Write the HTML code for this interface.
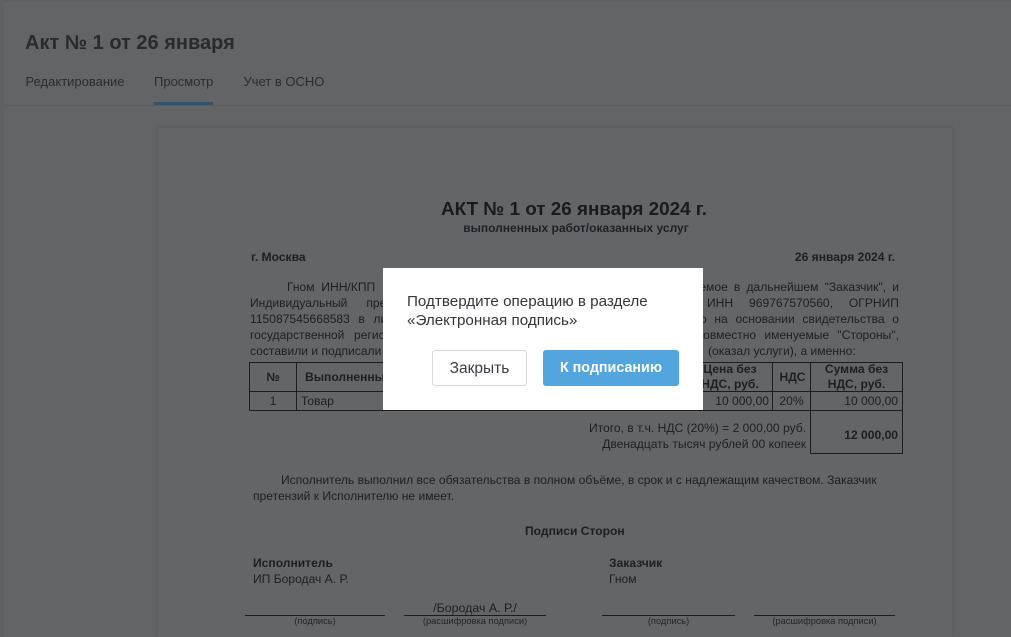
<!DOCTYPE html>
<html lang="ru"><head><meta charset="utf-8"><title>Акт</title>
<style>
html,body{margin:0;padding:0;width:1011px;height:637px;overflow:hidden;background:#636466}
body{position:relative;font-family:"Liberation Sans",Arial,sans-serif;color:#262626}
.a{position:absolute;white-space:nowrap}
.d{font-size:12.08px;line-height:16px;color:#1e1f21}
.j{text-align:justify;text-align-last:justify;white-space:normal}
.b{font-weight:bold}
.l{position:absolute;background:#1d1d1f}
.s{font-size:9.3px;line-height:11px;color:#242527;text-align:center}
.c{text-align:center}.r{text-align:right}
</style></head><body>
<div class="a" style="left:0;top:0;width:4px;height:637px;background:#5f6062"></div>
<div class="a" style="left:0;top:0;width:1011px;height:2px;background:#5f6062"></div>
<div class="a" style="left:4px;top:105px;width:1007px;height:1px;background:#5b5c5e"></div>
<div class="a" style="left:158px;top:128px;width:794px;height:509px;background:#646567;box-shadow:0 0 6px rgba(0,0,0,.12)"></div>

<div class="a b" style="left:25px;top:31px;font-size:20px;line-height:24px;color:#2a2b2d">Акт № 1 от 26 января</div>
<div class="a" style="left:25.5px;top:74px;font-size:13px;line-height:16px;color:#2c2d2f">Редактирование</div>
<div class="a" style="left:154px;top:74px;font-size:13px;line-height:16px;color:#2c2d2f">Просмотр</div>
<div class="a" style="left:243.5px;top:74px;font-size:13px;line-height:16px;color:#2c2d2f">Учет в ОСНО</div>
<div class="a" style="left:154px;top:102px;width:59px;height:3px;background:#34536b"></div>

<div class="a b c" style="left:157px;width:834px;top:198px;font-size:18.85px;line-height:22px;color:#1a1b1d">АКТ № 1 от 26 января 2024 г.</div>
<div class="a b c" style="left:157px;width:838px;top:221px;font-size:12px;line-height:15px;color:#202124">выполненных работ/оказанных услуг</div>
<div class="a d b" style="left:251px;top:249px">г. Москва</div>
<div class="a d b r" style="right:116px;top:249px">26 января 2024 г.</div>

<div class="a d" style="left:287px;top:279px;word-spacing:3.4px">Гном ИНН/КПП</div>
<div class="a d j" style="left:665px;width:234px;top:279px">именуемое в дальнейшем "Заказчик", и</div>
<div class="a d" style="left:250px;top:295px;word-spacing:15.6px">Индивидуальный предприниматель</div>
<div class="a d j" style="left:707px;width:192px;top:295px">ИНН 969767570560, ОГРНИП</div>
<div class="a d" style="left:250px;top:311px;word-spacing:5.2px">115087545668583 в лице</div>
<div class="a d j" style="left:700px;width:199px;top:311px">о на основании свидетельства о</div>
<div class="a d" style="left:250px;top:327px;word-spacing:6.3px">государственной регистрации</div>
<div class="a d j" style="left:697px;width:202px;top:327px">совместно именуемые "Стороны",</div>
<div class="a d" style="left:250px;top:343px">составили и подписали настоящий</div>
<div class="a d" style="left:708px;top:343px">(оказал услуги), а именно:</div>

<!-- table -->
<div class="l" style="left:249px;top:362px;width:654px;height:1px"></div>
<div class="l" style="left:249px;top:391px;width:654px;height:1px"></div>
<div class="l" style="left:249px;top:410px;width:654px;height:1px"></div>
<div class="l" style="left:810px;top:453px;width:93px;height:1px"></div>
<div class="l" style="left:249px;top:362px;width:1px;height:49px"></div>
<div class="l" style="left:296px;top:362px;width:1px;height:49px"></div>
<div class="l" style="left:772px;top:362px;width:1px;height:49px"></div>
<div class="l" style="left:810px;top:362px;width:1px;height:92px"></div>
<div class="l" style="left:902px;top:362px;width:1px;height:92px"></div>
<div class="a d b c" style="left:250px;width:46px;top:369px">№</div>
<div class="a d b" style="left:305px;top:369px">Выполненные работы</div>
<div class="a d b c" style="left:687px;width:86px;top:362px;line-height:15px">Цена без<br>НДС, руб.</div>
<div class="a d b c" style="left:774px;width:37px;top:369px">НДС</div>
<div class="a d b c" style="left:811px;width:91px;top:362px;line-height:15px">Сумма без<br>НДС, руб.</div>
<div class="a d c" style="left:250px;width:46px;top:393px">1</div>
<div class="a d" style="left:301px;top:393px">Товар</div>
<div class="a d r" style="right:242px;top:393px">10 000,00</div>
<div class="a d c" style="left:773px;width:37px;top:393px">20%</div>
<div class="a d r" style="right:113px;top:393px">10 000,00</div>
<div class="a d r" style="right:205px;top:420px">Итого, в т.ч. НДС (20%) = 2 000,00 руб.</div>
<div class="a d r" style="right:205px;top:436px">Двенадцать тысяч рублей 00 копеек</div>
<div class="a d b r" style="right:113px;top:427px">12 000,00</div>

<div class="a d" style="left:281px;top:472px">Исполнитель выполнил все обязательства в полном объёме, в срок и с надлежащим качеством. Заказчик</div>
<div class="a d" style="left:253px;top:488px">претензий к Исполнителю не имеет.</div>
<div class="a d b" style="left:525px;top:523px">Подписи Сторон</div>
<div class="a d b" style="left:253px;top:555px">Исполнитель</div>
<div class="a d" style="left:253px;top:571px">ИП Бородач А. Р.</div>
<div class="a d b" style="left:609px;top:555px">Заказчик</div>
<div class="a d" style="left:609px;top:571px">Гном</div>
<div class="a d c" style="left:404px;width:142px;top:600px;font-size:12.4px">/Бородач А. Р./</div>
<div class="l" style="left:245px;top:615px;width:140px;height:1px"></div>
<div class="l" style="left:404px;top:615px;width:142px;height:1px"></div>
<div class="l" style="left:602px;top:615px;width:133px;height:1px"></div>
<div class="l" style="left:754px;top:615px;width:141px;height:1px"></div>
<div class="a s" style="left:245px;width:140px;top:616px">(подпись)</div>
<div class="a s" style="left:404px;width:142px;top:616px">(расшифровка подписи)</div>
<div class="a s" style="left:602px;width:133px;top:616px">(подпись)</div>
<div class="a s" style="left:754px;width:141px;top:616px">(расшифровка подписи)</div>

<!-- modal -->
<div class="a" style="left:383px;top:268px;width:320px;height:142px;background:#fff"></div>
<div class="a" style="left:407px;top:292px;font-size:15.2px;line-height:19px;color:#33363b">Подтвердите операцию в разделе<br>«Электронная подпись»</div>
<div class="a c" style="left:432px;top:350px;width:93px;height:34px;border:1px solid #d9d9d9;border-radius:3px;background:#fff;font-size:15.5px;line-height:35px;color:#3b3e43">Закрыть</div>
<div class="a b c" style="left:543px;top:350px;width:136px;height:36px;border-radius:3px;background:#52a6dd;font-size:14.3px;line-height:37px;color:#fff">К подписанию</div>
</body></html>
